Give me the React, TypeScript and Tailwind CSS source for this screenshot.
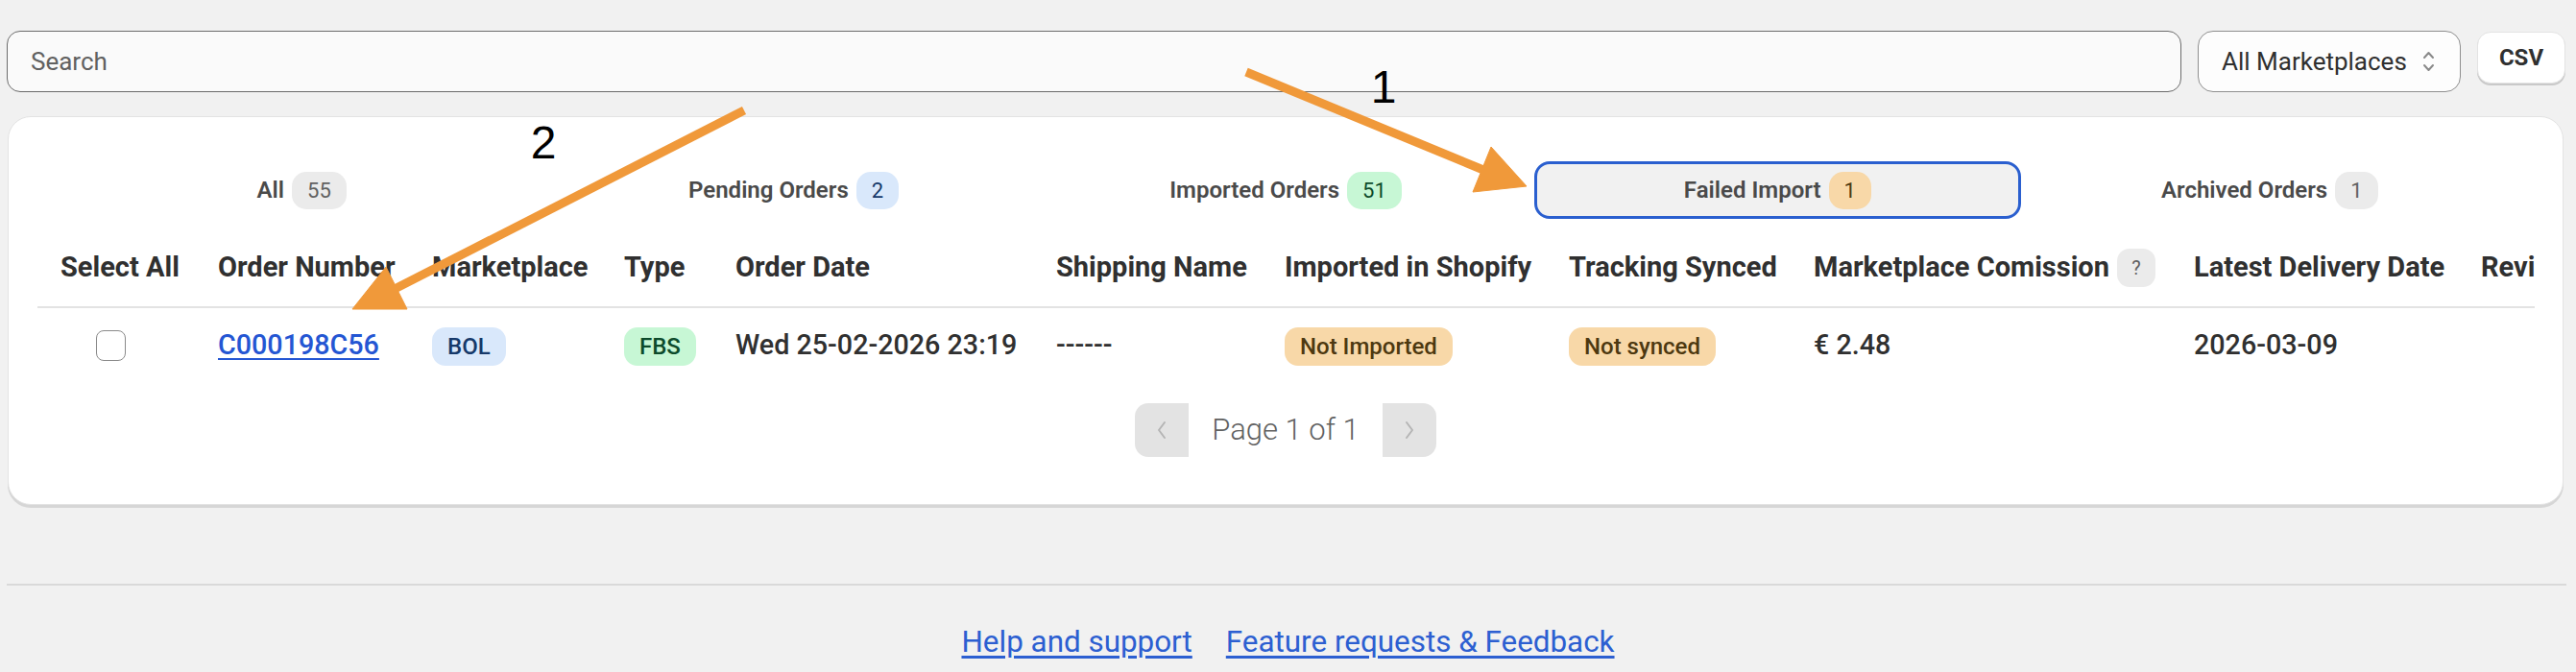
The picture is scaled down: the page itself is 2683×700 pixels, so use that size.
import React from 'react';

interface Tab {
  label: string;
  count: number;
  badge: string;
  active?: boolean;
}

const tabs: Tab[] = [
  { label: 'All', count: 55, badge: 'bg-[#ebebeb] text-[#616161]' },
  { label: 'Pending Orders', count: 2, badge: 'bg-[#d9e8fb] text-[#16396a]' },
  { label: 'Imported Orders', count: 51, badge: 'bg-[#c7f7d5] text-[#0d4b2b]' },
  { label: 'Failed Import', count: 1, badge: 'bg-[#f8d8a8] text-[#4d3810]', active: true },
  { label: 'Archived Orders', count: 1, badge: 'bg-[#ebebeb] text-[#616161]' },
];

const columns = [
  { label: 'Select All', w: 'w-[168px]', pad: 'pl-[24px]' },
  { label: 'Order Number', w: 'w-[222px]', pad: 'pl-[20px]' },
  { label: 'Marketplace', w: 'w-[201px]', pad: 'pl-[21px]' },
  { label: 'Type', w: 'w-[116px]', pad: 'pl-[20px]' },
  { label: 'Order Date', w: 'w-[334px]', pad: 'pl-[20px]' },
  { label: 'Shipping Name', w: 'w-[238px]', pad: 'pl-[20px]' },
  { label: 'Imported in Shopify', w: 'w-[296px]', pad: 'pl-[20px]' },
  { label: 'Tracking Synced', w: 'w-[255px]', pad: 'pl-[20px]' },
  { label: 'Marketplace Comission', w: 'w-[396px]', pad: 'pl-[20px]', help: true },
  { label: 'Latest Delivery Date', w: 'w-[299px]', pad: 'pl-[20px]' },
  { label: 'Review Status', w: 'w-[300px]', pad: 'pl-[20px]' },
];

const Pill: React.FC<{ className: string; children: React.ReactNode }> = ({ className, children }) => (
  <span className={`inline-flex h-[40px] items-center rounded-[14px] px-[16px] text-[24px] font-medium ${className}`}>
    {children}
  </span>
);

const SelectChevrons = () => (
  <svg width="15" height="24" viewBox="0 0 15 24" fill="none" stroke="#8a8a8a" strokeWidth="2" strokeLinecap="round" strokeLinejoin="round">
    <path d="M3 8 L7.5 3 L12 8" />
    <path d="M3 16 L7.5 21 L12 16" />
  </svg>
);

const Arrows = () => (
  <svg className="pointer-events-none absolute left-0 top-0" width="2683" height="700" viewBox="0 0 2683 700">
    <g fill="#f0993a" stroke="#f0993a">
      <line x1="1298" y1="75" x2="1545" y2="177" strokeWidth="9" />
      <polygon points="1553,153 1590,194 1534,200" strokeWidth="1" />
      <line x1="775" y1="115" x2="411" y2="301" strokeWidth="9" />
      <polygon points="402,278 367,322 424,322" strokeWidth="1" />
    </g>
    <text x="1441" y="107" fontSize="48" textAnchor="middle" fill="#000" fontFamily="Liberation Sans, Arial, sans-serif">1</text>
    <text x="566" y="165" fontSize="48" textAnchor="middle" fill="#000" fontFamily="Liberation Sans, Arial, sans-serif">2</text>
  </svg>
);

export default function App() {
  return (
    <div className="relative min-h-[700px] w-full overflow-hidden bg-[#f1f1f1] font-[Roboto,sans-serif] text-[#303030]">
      {/* Search bar */}
      <div className="flex items-start gap-[17px] pl-[7px] pr-[11px] pt-[32px]">
        <div className="flex h-[64px] flex-1 items-center rounded-[14px] border border-[#6b6b6b] bg-[#fafafa] pl-[24px] text-[26px] text-[#616161]">
          Search
        </div>
        <div className="flex h-[64px] w-[274px] items-center gap-[15px] rounded-[16px] border border-[#8f8f8f] bg-[#fdfdfd] pl-[24px] text-[26px] text-[#303030]">
          All Marketplaces
          <SelectChevrons />
        </div>
        <button className="mt-[1px] h-[54px] w-[92px] rounded-[14px] border border-[#e3e3e3] bg-white text-[24px] font-bold text-[#303030] shadow-[0_2px_0_0_#c9c9c9]">
          CSV
        </button>
      </div>

      {/* Card */}
      <div className="ml-[8px] mr-[13px] mt-[25px] rounded-[24px] border border-[#e3e3e3] bg-white pb-[49px] pt-[46px] shadow-[0_3px_0_0_#d6d6d6]">
        <div className="grid grid-cols-5 px-[49px]">
          {tabs.map((tab) => (
            <div key={tab.label} className="flex h-[60px] items-center justify-center">
              <div
                className={`flex h-full items-center justify-center gap-[8px] text-[24px] font-semibold text-[#4a4a4a] ${
                  tab.active ? 'mx-[3px] w-full rounded-[16px] border-[3px] border-[#2a5fcf] bg-[#f1f1f1]' : ''
                }`}
              >
                {tab.label}
                <span className={`flex h-[39px] items-center rounded-[15px] px-[16px] text-[22px] font-normal ${tab.badge}`}>
                  {tab.count}
                </span>
              </div>
            </div>
          ))}
        </div>

        {/* Table */}
        <div className="ml-[30px] mr-[29px] mt-[10px] overflow-hidden">
          <table className="w-[2825px] table-fixed border-collapse text-left">
            <colgroup>
              {columns.map((c) => (
                <col key={c.label} className={c.w} />
              ))}
            </colgroup>
            <thead>
              <tr className="h-[82px] border-b-2 border-[#e3e3e3]">
                {columns.map((c) => (
                  <th key={c.label} className={`whitespace-nowrap pr-[20px] align-middle text-[29px] font-bold text-[#303030] ${c.pad}`}>
                    {c.help ? (
                      <span className="flex items-center gap-[8px]">
                        {c.label}
                        <span className="flex h-[40px] w-[43px] items-center justify-center rounded-[13px] bg-[#ebebeb] text-[20px] font-normal text-[#616161]">
                          ?
                        </span>
                      </span>
                    ) : (
                      c.label
                    )}
                  </th>
                ))}
              </tr>
            </thead>
            <tbody>
              <tr className="h-[78px] text-[28.7px] font-medium text-[#303030]">
                <td className="pl-[61px] align-middle">
                  <div className="h-[32px] w-[31px] rounded-[8px] border border-[#8a8a8a] bg-white" />
                </td>
                <td className="pl-[20px] align-middle">
                  <a href="#" className="text-[#2456d3] underline decoration-[2px] underline-offset-[4px]">
                    C000198C56
                  </a>
                </td>
                <td className="pl-[21px] align-middle">
                  <Pill className="bg-[#d9e8fb] text-[#16396a]">BOL</Pill>
                </td>
                <td className="pl-[20px] align-middle">
                  <Pill className="bg-[#c7f7d5] text-[#0d4b2b]">FBS</Pill>
                </td>
                <td className="whitespace-nowrap pl-[20px] align-middle">Wed 25-02-2026 23:19</td>
                <td className="pl-[20px] align-middle">------</td>
                <td className="pl-[20px] align-middle">
                  <Pill className="bg-[#f8d8a8] text-[#4d3810]">Not Imported</Pill>
                </td>
                <td className="pl-[20px] align-middle">
                  <Pill className="bg-[#f8d8a8] text-[#4d3810]">Not synced</Pill>
                </td>
                <td className="pl-[20px] align-middle">€ 2.48</td>
                <td className="pl-[20px] align-middle">2026-03-09</td>
                <td className="pl-[20px] align-middle" />
              </tr>
            </tbody>
          </table>
        </div>

        {/* Pagination */}
        <div className="mt-[22px] flex items-center justify-center">
          <div className="flex h-[56px] w-[56px] items-center justify-center rounded-l-[14px] bg-[#e3e3e3]">
            <svg width="12" height="20" viewBox="0 0 12 20" fill="none" stroke="#b5b5b5" strokeWidth="2" strokeLinecap="round" strokeLinejoin="round">
              <path d="M9 2 L3 10 L9 18" />
            </svg>
          </div>
          <span className="w-[202px] text-center text-[31px] font-light text-[#616161]">Page 1 of 1</span>
          <div className="flex h-[56px] w-[56px] items-center justify-center rounded-r-[14px] bg-[#e3e3e3]">
            <svg width="12" height="20" viewBox="0 0 12 20" fill="none" stroke="#b5b5b5" strokeWidth="2" strokeLinecap="round" strokeLinejoin="round">
              <path d="M3 2 L9 10 L3 18" />
            </svg>
          </div>
        </div>
      </div>

      {/* Footer */}
      <div className="ml-[7px] mr-[10px] mt-[82px] h-[2px] bg-[#d9d9d9]" />
      <div className="mt-[35px] flex justify-center gap-[35px] text-[31.4px] text-[#2c5fd1]">
        <a href="#" className="underline underline-offset-[4px]">Help and support</a>
        <a href="#" className="underline underline-offset-[4px]">Feature requests &amp; Feedback</a>
      </div>

      <Arrows />
    </div>
  );
}
